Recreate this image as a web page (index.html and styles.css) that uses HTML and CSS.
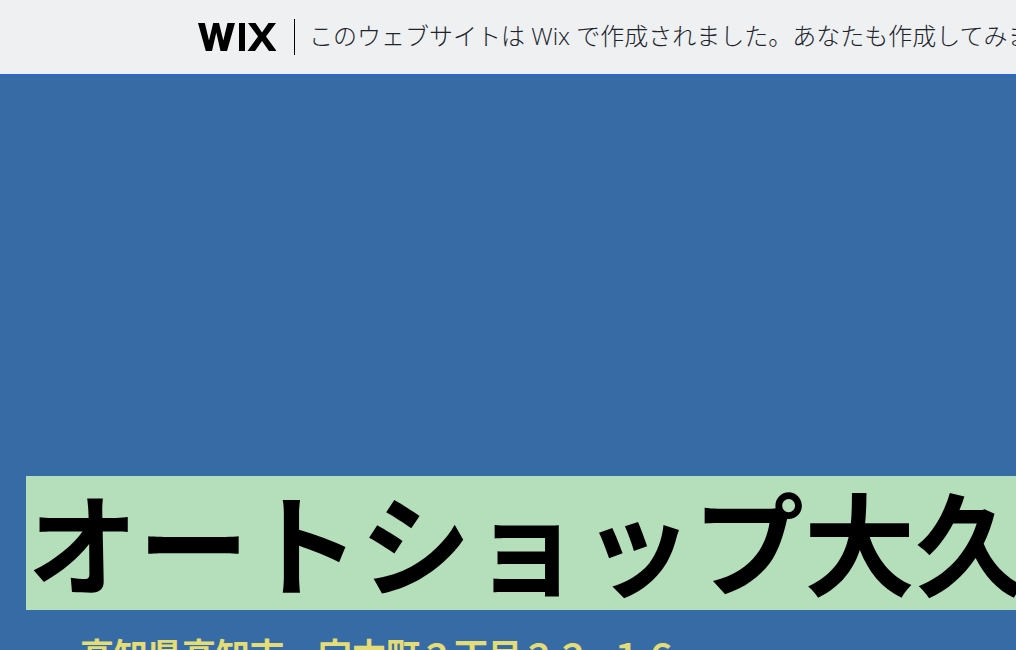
FILE: index.html
```html
<!DOCTYPE html>
<html lang="ja">
<head>
<meta charset="utf-8">
<title>オートショップ大久保</title>
<link rel="stylesheet" href="styles.css">
</head>
<body>
<header class="banner">
  <div class="banner-inner">
    <svg class="wix-logo" viewBox="0 0 78 28" aria-label="Wix"><path d="M0 0h6.800l4.200 17.500L15.200 0h5.800l4.300 17.500L29.500 0H37l-8 28h-6.500l-4.200-18.500L14 28H7.800zM41 0h6v28h-6zM50 0h7.500L64 9.500 70.500 0H78L68 13.500 78.500 28H71l-7-10-7 10h-7.500L60 13.500z"/></svg>
    <span class="divider"></span>
    <span class="banner-text">このウェブサイトは Wix で作成されました。あなたも作成してみませんか？</span>
  </div>
</header>
<main class="hero">
  <h1 class="title">オートショップ大久保</h1>
  <p class="address">高知県高知市　宝本町２丁目２２- １６</p>
</main>
</body>
</html>
```
FILE: styles.css
```css
html, body {
  margin: 0;
  height: 100%;
  overflow: hidden;
}
body {
  background: #376ba5;
  font-family: "Noto Sans CJK JP", "Noto Sans", sans-serif;
}
.banner {
  height: 74px;
  background: #eff0f2;
  border-bottom: 2px solid #2f66cf;
  overflow: hidden;
}
.banner-inner {
  display: flex;
  align-items: center;
  height: 73px;
  padding-left: 198px;
  white-space: nowrap;
}
.wix-logo {
  width: 78px;
  height: 28px;
  flex: none;
  fill: #000;
}
.divider {
  width: 1px;
  height: 36px;
  margin: 0 16px 0 18px;
  background: #000;
  flex: none;
}
.banner-text {
  font-family: "Open Sans", "Noto Sans CJK JP", sans-serif;
  font-size: 24px;
  line-height: 32px;
  color: #20242b;
  font-weight: 300;
  margin: -1px 0 0 -2px;
}
.hero {
  padding: 400px 0 0 26px;
}
.title {
  margin: 0;
  height: 134px;
  padding-left: 1px;
  background: #b5dfba;
  color: #000;
  font-size: 111px;
  font-weight: 700;
  line-height: 128px;
  white-space: nowrap;
  overflow: hidden;
}
.address {
  margin: 22px 0 0 54px;
  font-size: 34px;
  font-weight: 700;
  line-height: 44px;
  color: #e3dc77;
  white-space: nowrap;
}
```
